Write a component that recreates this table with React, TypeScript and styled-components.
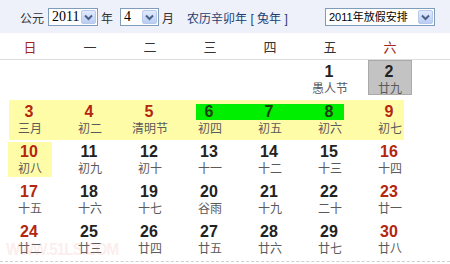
import styled, { createGlobalStyle } from 'styled-components';

type Day = {
  d: number;
  lunar: string;
  red?: boolean;
  box?: 'gray' | 'yellow';
  green?: 'start' | 'mid' | 'end';
};

const weekNames = ['日', '一', '二', '三', '四', '五', '六'];

const weeks: { hl?: boolean; days: (Day | null)[] }[] = [
  {
    days: [null, null, null, null, null, { d: 1, lunar: '愚人节' }, { d: 2, lunar: '廿九', box: 'gray' }],
  },
  {
    hl: true,
    days: [
      { d: 3, lunar: '三月', red: true },
      { d: 4, lunar: '初二', red: true },
      { d: 5, lunar: '清明节', red: true },
      { d: 6, lunar: '初四', green: 'start' },
      { d: 7, lunar: '初五', green: 'mid' },
      { d: 8, lunar: '初六', green: 'end' },
      { d: 9, lunar: '初七', red: true },
    ],
  },
  {
    days: [
      { d: 10, lunar: '初八', red: true, box: 'yellow' },
      { d: 11, lunar: '初九' },
      { d: 12, lunar: '初十' },
      { d: 13, lunar: '十一' },
      { d: 14, lunar: '十二' },
      { d: 15, lunar: '十三' },
      { d: 16, lunar: '十四', red: true },
    ],
  },
  {
    days: [
      { d: 17, lunar: '十五', red: true },
      { d: 18, lunar: '十六' },
      { d: 19, lunar: '十七' },
      { d: 20, lunar: '谷雨' },
      { d: 21, lunar: '十九' },
      { d: 22, lunar: '二十' },
      { d: 23, lunar: '廿一', red: true },
    ],
  },
  {
    days: [
      { d: 24, lunar: '廿二', red: true },
      { d: 25, lunar: '廿三' },
      { d: 26, lunar: '廿四' },
      { d: 27, lunar: '廿五' },
      { d: 28, lunar: '廿六' },
      { d: 29, lunar: '廿七' },
      { d: 30, lunar: '廿八', red: true },
    ],
  },
];

const Chevron = () => (
  <svg width="9" height="7" viewBox="0 0 9 7">
    <path d="M1 1.5 L4.5 5 L8 1.5" fill="none" stroke="#4a5f8a" strokeWidth="2" />
  </svg>
);

const App: React.FC = () => {
  return (
    <Page>
      <GlobalStyle />
      <TopBar>
        <Label>公元</Label>
        <Select $width={50}>
          <SelectText $serif>2011</SelectText>
          <ArrowBtn>
            <Chevron />
          </ArrowBtn>
        </Select>
        <Label>年</Label>
        <Select $width={39} style={{ marginLeft: 3 }}>
          <SelectText $serif>4</SelectText>
          <ArrowBtn>
            <Chevron />
          </ArrowBtn>
        </Select>
        <Label>月</Label>
        <LunarYear>农历辛卯年 [ 兔年 ]</LunarYear>
        <RightSelect $width={110}>
          <SelectText>2011年放假安排</SelectText>
          <ArrowBtn>
            <Chevron />
          </ArrowBtn>
        </RightSelect>
      </TopBar>
      <WeekHeader>
        {weekNames.map((w, i) => (
          <WeekName key={w} $red={i === 0 || i === 6}>
            {w}
          </WeekName>
        ))}
      </WeekHeader>
      <Body>
        {weeks.map((week, wi) => (
          <WeekRow key={wi} $hl={week.hl}>
            {week.days.map((day, di) => (
              <Cell key={di}>
                {day && (
                  <CellBox $box={day.box}>
                    <Num $red={day.red} $green={day.green}>
                      {day.d}
                    </Num>
                    <Lunar>{day.lunar}</Lunar>
                  </CellBox>
                )}
              </Cell>
            ))}
          </WeekRow>
        ))}
        <Watermark>WWW.51LS.COM</Watermark>
      </Body>
    </Page>
  );
};
export default App;

const GlobalStyle = createGlobalStyle`
  body {
    margin: 0;
    background: #fff;
    font-family: "Liberation Sans", "Noto Sans CJK SC", sans-serif;
  }
`;

const Page = styled.div`
  width: 450px;
  height: 264px;
  overflow: hidden;
`;

const TopBar = styled.div`
  height: 33px;
  background: #eef1f9;
  display: flex;
  align-items: center;
  padding: 1px 15px 0 20px;
  box-sizing: border-box;
  font-size: 12px;
  color: #333;
`;

const Label = styled.span`
  margin: 0 4px 0 3px;
  &:first-child {
    margin-left: 0;
  }
`;

const LunarYear = styled.span`
  margin-left: 9px;
  color: #1d3f72;
`;

const Select = styled.div<{ $width: number }>`
  width: ${(p) => p.$width}px;
  height: 18px;
  box-sizing: border-box;
  border: 1px solid #7f9db9;
  background: #fff;
  display: flex;
  align-items: center;
  justify-content: space-between;
  padding: 0 1px 0 3px;
`;

const RightSelect = styled(Select)`
  margin-left: auto;
`;

const SelectText = styled.span<{ $serif?: boolean }>`
  font-family: ${(p) =>
    p.$serif ? '"Liberation Serif", serif' : '"Liberation Sans", "Noto Sans CJK SC", sans-serif'};
  font-size: ${(p) => (p.$serif ? 14 : 11)}px;
  color: #000;
  line-height: 16px;
  white-space: nowrap;
`;

const ArrowBtn = styled.span`
  width: 15px;
  height: 14px;
  flex-shrink: 0;
  box-sizing: border-box;
  border: 1px solid #b8c9ec;
  border-radius: 2px;
  background: linear-gradient(#e2ebfd, #b9cdf4);
  display: flex;
  align-items: center;
  justify-content: center;
`;

const WeekHeader = styled.div`
  display: grid;
  grid-template-columns: repeat(7, 60px);
  height: 27px;
  align-items: center;
  border-bottom: 1px solid #dcdcdc;
  box-sizing: border-box;
`;

const WeekName = styled.div<{ $red?: boolean }>`
  text-align: center;
  font-size: 13px;
  color: ${(p) => (p.$red ? '#a3231a' : '#333')};
`;

const Body = styled.div`
  position: relative;
  width: 450px;
  border-bottom: 1px dashed #cfcfcf;
  padding-bottom: 1px;
`;

const WeekRow = styled.div<{ $hl?: boolean }>`
  display: grid;
  grid-template-columns: repeat(7, 60px);
  height: 40px;
  background: ${(p) =>
    p.$hl ? 'linear-gradient(#fffca8, #fffca8) 9px 0 / 395px 100% no-repeat' : 'transparent'};
`;

const Cell = styled.div`
  display: flex;
  justify-content: center;
`;

const CellBox = styled.div<{ $box?: 'gray' | 'yellow' }>`
  width: ${(p) => (p.$box ? '44px' : '60px')};
  height: 35px;
  margin-top: ${(p) => (p.$box === 'yellow' ? 2 : 0)}px;
  box-sizing: border-box;
  background: ${(p) => (p.$box === 'gray' ? '#c3c3c3' : p.$box === 'yellow' ? '#fffca8' : 'transparent')};
  border: ${(p) => (p.$box === 'gray' ? '1px solid #a9a9a9' : 'none')};
  display: flex;
  flex-direction: column;
  align-items: center;
  padding-top: ${(p) => (p.$box === 'gray' ? 3 : p.$box === 'yellow' ? 2 : 4)}px;
`;

const greenBg = {
  start: 'linear-gradient(#00ee00, #00ee00) right / 44px 100% no-repeat',
  mid: '#00ee00',
  end: 'linear-gradient(#00ee00, #00ee00) left / 44px 100% no-repeat',
};

const Num = styled.div<{ $red?: boolean; $green?: 'start' | 'mid' | 'end' }>`
  align-self: stretch;
  text-align: center;
  font-size: 16px;
  font-weight: bold;
  line-height: 16px;
  height: 16px;
  padding-right: 2px;
  color: ${(p) => (p.$red ? '#b3260f' : p.$green ? '#1f3d12' : '#222')};
  background: ${(p) => (p.$green ? greenBg[p.$green] : 'transparent')};
`;

const Lunar = styled.div`
  margin-top: 2px;
  font-size: 12px;
  line-height: 15px;
  color: #5a5a5a;
  white-space: nowrap;
`;

const Watermark = styled.div`
  position: absolute;
  left: 6px;
  bottom: 1px;
  font-size: 17px;
  font-weight: bold;
  letter-spacing: -1px;
  color: rgba(235, 150, 140, 0.18);
  transform: scaleX(0.9);
  transform-origin: left;
  pointer-events: none;
`;
